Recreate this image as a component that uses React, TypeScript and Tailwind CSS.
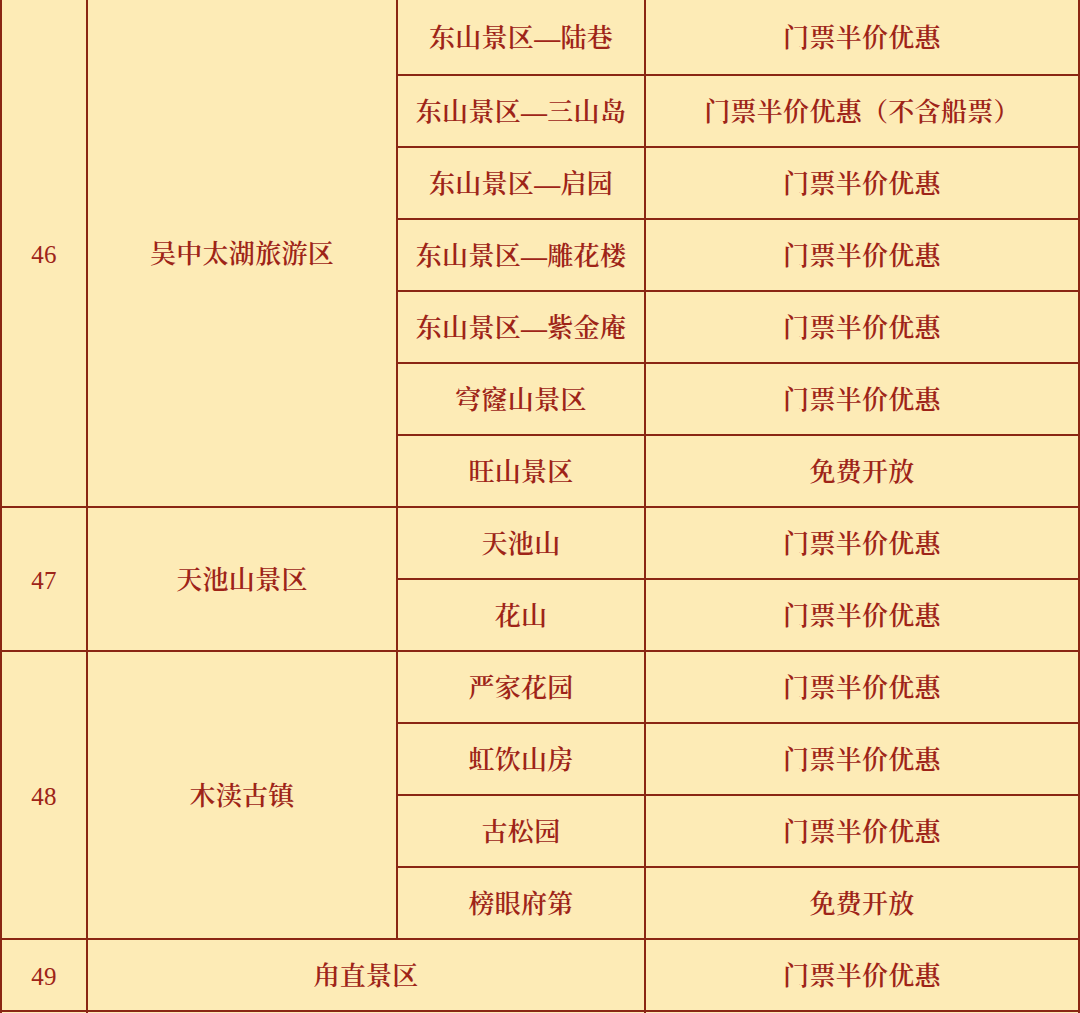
import React from "react";

const font = {
  fontFamily:
    '"Liberation Serif", "Noto Serif CJK SC", "Noto Sans CJK SC", serif',
};

type Cell = { text: string; col: string; row: string; num?: boolean };

const cells: Cell[] = [
  { text: "46", col: "col-start-1", row: "row-start-1 row-span-7", num: true },
  { text: "吴中太湖旅游区", col: "col-start-2", row: "row-start-1 row-span-7" },
  { text: "东山景区—陆巷", col: "col-start-3", row: "row-start-1" },
  { text: "门票半价优惠", col: "col-start-4", row: "row-start-1" },
  { text: "东山景区—三山岛", col: "col-start-3", row: "row-start-2" },
  { text: "门票半价优惠（不含船票）", col: "col-start-4", row: "row-start-2" },
  { text: "东山景区—启园", col: "col-start-3", row: "row-start-3" },
  { text: "门票半价优惠", col: "col-start-4", row: "row-start-3" },
  { text: "东山景区—雕花楼", col: "col-start-3", row: "row-start-4" },
  { text: "门票半价优惠", col: "col-start-4", row: "row-start-4" },
  { text: "东山景区—紫金庵", col: "col-start-3", row: "row-start-5" },
  { text: "门票半价优惠", col: "col-start-4", row: "row-start-5" },
  { text: "穹窿山景区", col: "col-start-3", row: "row-start-6" },
  { text: "门票半价优惠", col: "col-start-4", row: "row-start-6" },
  { text: "旺山景区", col: "col-start-3", row: "row-start-7" },
  { text: "免费开放", col: "col-start-4", row: "row-start-7" },
  { text: "47", col: "col-start-1", row: "row-start-8 row-span-2", num: true },
  { text: "天池山景区", col: "col-start-2", row: "row-start-8 row-span-2" },
  { text: "天池山", col: "col-start-3", row: "row-start-8" },
  { text: "门票半价优惠", col: "col-start-4", row: "row-start-8" },
  { text: "花山", col: "col-start-3", row: "row-start-9" },
  { text: "门票半价优惠", col: "col-start-4", row: "row-start-9" },
  { text: "48", col: "col-start-1", row: "row-start-10 row-span-4", num: true },
  { text: "木渎古镇", col: "col-start-2", row: "row-start-10 row-span-4" },
  { text: "严家花园", col: "col-start-3", row: "row-start-10" },
  { text: "门票半价优惠", col: "col-start-4", row: "row-start-10" },
  { text: "虹饮山房", col: "col-start-3", row: "row-start-11" },
  { text: "门票半价优惠", col: "col-start-4", row: "row-start-11" },
  { text: "古松园", col: "col-start-3", row: "row-start-12" },
  { text: "门票半价优惠", col: "col-start-4", row: "row-start-12" },
  { text: "榜眼府第", col: "col-start-3", row: "row-start-13" },
  { text: "免费开放", col: "col-start-4", row: "row-start-13" },
  { text: "49", col: "col-start-1", row: "row-start-14", num: true },
  { text: "甪直景区", col: "col-start-2 col-span-2", row: "row-start-14" },
  { text: "门票半价优惠", col: "col-start-4", row: "row-start-14" },
  { text: "", col: "col-start-1", row: "row-start-15" },
  { text: "", col: "col-start-2 col-span-2", row: "row-start-15" },
  { text: "", col: "col-start-4", row: "row-start-15" },
];

export default function App() {
  return (
    <div className="w-[1080px] h-[1013px] overflow-hidden bg-[#fdebb6]">
      <div
        className="grid grid-cols-[84px_308px_246px_432px] grid-rows-[74px_repeat(13,70px)_20px] gap-[2px] bg-[#8a2614] px-[2px]"
        style={font}
      >
        {cells.map((c, i) => (
          <div
            key={i}
            className={`${c.col} ${c.row} ${
              c.num ? "font-normal text-[25px]" : "font-semibold text-[26px]"
            } flex items-center justify-center bg-[#fdebb6] pt-[3px] leading-none tracking-[0.3px] text-[#9e2418]`}
          >
            {c.text}
          </div>
        ))}
      </div>
    </div>
  );
}
